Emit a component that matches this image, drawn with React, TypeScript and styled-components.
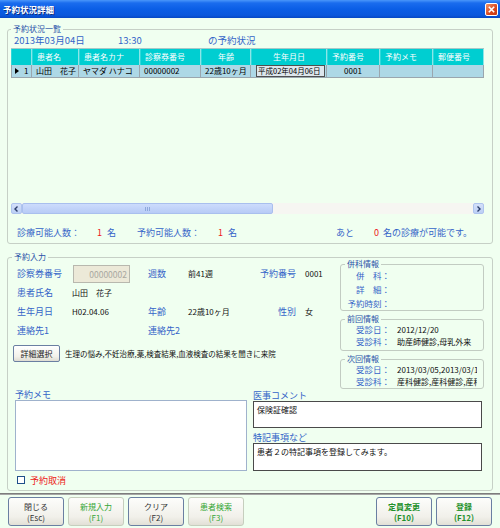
import React from "react";
import styled, { createGlobalStyle, css } from "styled-components";

const GlobalStyle = createGlobalStyle`
  html, body {
    margin: 0;
    padding: 0;
  }
  body {
    font-family: "Noto Sans CJK JP", "Noto Sans", sans-serif;
  }
  * {
    box-sizing: border-box;
  }
`;

const BLUE = "#3464c8";
const LEGEND = "#2a52a8";
const COLS = "21px 47px 61px 61px 50px 76px 53px 53px 51px";

const Window = styled.div`
  width: 500px;
  height: 528px;
  background: #f0fff0;
  display: flex;
  flex-direction: column;
  overflow: hidden;
`;

const TitleBar = styled.div`
  height: 18px;
  flex: none;
  display: flex;
  align-items: center;
  justify-content: space-between;
  padding: 0 2px 0 3px;
  background: linear-gradient(#4a96fa 0px, #1a6cee 3px, #0b5ee6 50%, #0a58dc 85%, #0648c4 100%);
`;

const Title = styled.span`
  color: #fff;
  font-size: 8.5px;
  font-weight: 700;
  line-height: 12px;
  text-shadow: 1px 1px 0 #0a2a80;
`;

const CloseBtn = styled.div`
  width: 13px;
  height: 13px;
  border: 1px solid #fff;
  border-radius: 2px;
  background: linear-gradient(135deg, #f29468, #d9461e 60%, #c63a14);
  display: flex;
  align-items: center;
  justify-content: center;
`;

const Body = styled.div`
  flex: none;
  padding: 0 7px;
`;

const Group = styled.fieldset<{ $top: number; $left: number; $bottom: number }>`
  margin: ${(p) => p.$top}px 0 0 0;
  padding: 0 8px ${(p) => p.$bottom}px ${(p) => p.$left}px;
  border: 1px solid #c6d0c6;
  border-radius: 3px;
  min-inline-size: 0;
`;

const Legend = styled.legend`
  font-size: 8px;
  line-height: 8px;
  color: ${LEGEND};
  padding: 0 2px;
`;

const Line = styled.div<{ $pad?: number }>`
  display: flex;
  align-items: center;
  height: 11px;
  padding-left: ${(p) => p.$pad ?? 0}px;
`;

const Cell = styled.span<{ $w?: number; $size?: number; $red?: boolean }>`
  flex: none;
  width: ${(p) => (p.$w ? `${p.$w}px` : "auto")};
  font-size: ${(p) => p.$size ?? 9}px;
  color: ${(p) => (p.$red ? "#ee1818" : BLUE)};
  white-space: nowrap;
`;

const DateLine = styled(Line)`
  margin-top: 2px;
  height: 10px;
  line-height: 10px;
`;

const GridArea = styled.div`
  margin-top: 3px;
  height: 155px;
`;

const HeaderRow = styled.div`
  display: grid;
  grid-template-columns: ${COLS};
  height: 17px;
  background: #00ced1;
  border-top: 1px solid #a8c8c8;
`;

const HCell = styled.div<{ $center?: boolean }>`
  color: #fff;
  font-size: 8px;
  line-height: 15px;
  padding-left: 4px;
  border-right: 1px solid #8ce6e8;
  border-left: 1px solid #30d8da;
  white-space: nowrap;
  overflow: hidden;
  ${(p) =>
    p.$center &&
    css`
      text-align: center;
      padding-left: 0;
    `}
`;

const DataRow = styled.div`
  display: grid;
  grid-template-columns: ${COLS};
  height: 13px;
  background: #add8e6;
  border-bottom: 1px solid #9aa6ae;
`;

const DCell = styled.div<{ $center?: boolean }>`
  font-size: 8px;
  line-height: 12px;
  color: #000;
  padding-left: 4px;
  border-right: 1px solid #9aa6ae;
  white-space: nowrap;
  overflow: hidden;
  text-align: ${(p) => (p.$center ? "center" : "left")};
  ${(p) => p.$center && "padding-left: 0;"}
`;

const RowHead = styled(DCell)`
  display: flex;
  align-items: center;
  gap: 5px;
  padding-left: 3px;
  border-left: 1px solid #9aa6ae;
`;

const Tri = styled.span`
  width: 0;
  height: 0;
  border-top: 3px solid transparent;
  border-bottom: 3px solid transparent;
  border-left: 4px solid #000;
`;

const EditCell = styled.div`
  margin: 0 1px;
  height: 12px;
  border: 1px solid #505050;
  background: #dde6ec;
  font-size: 7.5px;
  line-height: 10px;
  padding-left: 1px;
  white-space: nowrap;
  overflow: hidden;
`;

const ScrollBar = styled.div`
  display: flex;
  height: 11px;
  background: #f6f6f2;
`;

const ArrowBtn = styled.div`
  flex: none;
  width: 11px;
  height: 11px;
  background: linear-gradient(#d4e0fa, #bccff5);
  border: 1px solid #aec4ee;
  border-radius: 2px;
  display: flex;
  align-items: center;
  justify-content: center;
`;

const Thumb = styled.div`
  flex: none;
  width: 251px;
  height: 11px;
  background: linear-gradient(#cddcfc, #b7cbf6);
  border: 1px solid #a9bfee;
  border-radius: 2px;
  display: flex;
  align-items: center;
  justify-content: center;
`;

const Grip = styled.span`
  width: 5px;
  height: 4px;
  background: repeating-linear-gradient(90deg, #8ea8dc 0 1px, transparent 1px 2px);
`;

const Track = styled.div`
  flex: 1;
`;

const CountLine = styled(Line)`
  margin-top: 12px;
  height: 12px;
`;

const TopSection = styled.div`
  display: flex;
`;

const LeftForm = styled.div`
  width: 328px;
  padding-top: 3px;
`;

const FormGrid = styled.div`
  display: grid;
  grid-template-columns: 55px 76px 40px 52px 56px 1fr;
  grid-auto-rows: 19px;
  align-items: center;
  padding-left: 5px;
`;

const Label = styled.span<{ $right?: boolean }>`
  font-size: 9px;
  color: ${BLUE};
  white-space: nowrap;
  text-align: ${(p) => (p.$right ? "right" : "left")};
`;

const Value = styled.span<{ $span?: number; $pad?: number }>`
  font-size: 8px;
  color: #111;
  white-space: nowrap;
  grid-column: span ${(p) => p.$span ?? 1};
  padding-left: ${(p) => p.$pad ?? 0}px;
`;

const IdInput = styled.div`
  margin-left: 1px;
  width: 57px;
  height: 18px;
  background: #ece9d8;
  border: 1px solid #b8b8ae;
  color: #a8a8a0;
  font-size: 8.5px;
  line-height: 16px;
  text-align: right;
  padding-right: 2px;
`;

const ButtonRow = styled.div`
  display: flex;
  align-items: center;
  gap: 5px;
  margin-top: 5px;
  padding-left: 1px;
`;

const SmallBtn = styled.div`
  width: 47px;
  height: 17px;
  border: 1px solid #6a7fa2;
  border-radius: 2px;
  background: linear-gradient(#ffffff, #f2f1ea 70%, #dedcd2);
  font-size: 8px;
  line-height: 15px;
  text-align: center;
  color: #222;
`;

const Note = styled.span`
  font-size: 7.5px;
  color: #111;
  white-space: nowrap;
`;

const RightCol = styled.div`
  width: 144px;
  margin-top: -1px;
  display: flex;
  flex-direction: column;
  gap: 4px;
`;

const InfoBox = styled.fieldset<{ $bottom: number }>`
  margin: 0;
  padding: 0 0 ${(p) => p.$bottom}px 0;
  border: 1px solid #c2ccc2;
  border-radius: 3px;
  min-inline-size: 0;
`;

const InfoLegend = styled(Legend)`
  margin-left: 4px;
`;

const InfoRow = styled.div<{ $h: number }>`
  display: grid;
  grid-template-columns: 49px minmax(0, 1fr);
  column-gap: 7px;
  height: ${(p) => p.$h}px;
  align-items: center;
  padding-right: 6px;
`;

const InfoLabel = styled.span`
  font-size: 8.5px;
  color: ${BLUE};
  text-align: right;
  white-space: nowrap;
`;

const InfoValue = styled.span`
  font-size: 8px;
  color: #111;
  white-space: nowrap;
  overflow: hidden;
  min-width: 0;
`;

const MemoSection = styled.div`
  display: flex;
  gap: 6px;
  padding-left: 3px;
`;

const MemoCol = styled.div<{ $w: number }>`
  width: ${(p) => p.$w}px;
  display: flex;
  flex-direction: column;
`;

const MemoLabel = styled.div<{ $h: number }>`
  height: ${(p) => p.$h}px;
  font-size: 9px;
  line-height: 11px;
  color: ${BLUE};
  display: flex;
  align-items: flex-end;
`;

const TextBox = styled.div<{ $h: number; $dark?: boolean }>`
  height: ${(p) => p.$h}px;
  background: #fff;
  border: 1px solid ${(p) => (p.$dark ? "#4a4a4a" : "#9fb2cc")};
  font-size: 8px;
  line-height: 12px;
  padding: 2px 3px;
  color: #111;
`;

const CheckLine = styled.div`
  display: flex;
  align-items: center;
  gap: 5px;
  height: 12px;
  margin-top: 3px;
  padding-left: 5px;
`;

const CheckBox = styled.span`
  width: 8px;
  height: 8px;
  border: 1px solid #1f4f8a;
  background: #fff;
`;

const CheckText = styled.span`
  font-size: 9px;
  color: #ee1818;
`;

const Separator = styled.div`
  margin-top: 2px;
  height: 2px;
  border-top: 1px solid #7c7c7c;
  border-bottom: 1px solid #a6a6a6;
`;

const Footer = styled.div`
  display: flex;
  justify-content: space-between;
  padding: 2px 8px 0 8px;
`;

const KeyGroup = styled.div`
  display: flex;
  gap: 4px;
`;

type Tone = "plain" | "soft" | "strong";

const KeyBtn = styled.div<{ $tone: Tone }>`
  width: 56px;
  height: 29px;
  border-radius: 3px;
  border: 1px solid ${(p) => (p.$tone === "soft" ? "#c6cebe" : "#6a7fa2")};
  background: linear-gradient(#fdfdfb, #f1f0ea 70%, #e2e0d6);
  display: flex;
  flex-direction: column;
  align-items: center;
  justify-content: center;
  font-size: 8px;
  line-height: 11px;
  color: ${(p) => (p.$tone === "plain" ? "#333" : p.$tone === "soft" ? "#34a634" : "#22902a")};
  font-weight: ${(p) => (p.$tone === "strong" ? 700 : 400)};
`;

const Chevron = ({ dir }: { dir: "l" | "r" }) => (
  <svg width="5" height="6" viewBox="0 0 5 6">
    <path
      d={dir === "l" ? "M3.5 0.5 L1 3 L3.5 5.5" : "M1.5 0.5 L4 3 L1.5 5.5"}
      fill="none"
      stroke="#2c3e6a"
      strokeWidth="1.4"
    />
  </svg>
);

const keys: { top: string; sub: string; tone: Tone }[] = [
  { top: "閉じる", sub: "(Esc)", tone: "plain" },
  { top: "新規入力", sub: "(F1)", tone: "soft" },
  { top: "クリア", sub: "(F2)", tone: "plain" },
  { top: "患者検索", sub: "(F3)", tone: "soft" },
];

const rightKeys: { top: string; sub: string; tone: Tone }[] = [
  { top: "定員変更", sub: "(F10)", tone: "strong" },
  { top: "登録", sub: "(F12)", tone: "strong" },
];

export default function App() {
  return (
    <>
      <GlobalStyle />
      <Window>
        <TitleBar>
          <Title>予約状況詳細</Title>
          <CloseBtn>
            <svg width="7" height="7" viewBox="0 0 7 7">
              <path d="M0.8 0.8 L6.2 6.2 M6.2 0.8 L0.8 6.2" stroke="#fff" strokeWidth="1.6" />
            </svg>
          </CloseBtn>
        </TitleBar>

        <Body>
          <Group $top={7} $left={3} $bottom={5}>
            <Legend>予約状況一覧</Legend>
            <DateLine $pad={3}>
              <Cell $w={104} $size={9.5}>2013年03月04日</Cell>
              <Cell $w={90} $size={9.5}>13:30</Cell>
              <Cell $size={9.5}>の予約状況</Cell>
            </DateLine>

            <GridArea>
              <HeaderRow>
                <HCell />
                <HCell>患者名</HCell>
                <HCell>患者名カナ</HCell>
                <HCell>診察券番号</HCell>
                <HCell $center>年齢</HCell>
                <HCell $center>生年月日</HCell>
                <HCell>予約番号</HCell>
                <HCell>予約メモ</HCell>
                <HCell>郵便番号</HCell>
              </HeaderRow>
              <DataRow>
                <RowHead>
                  <Tri />
                  1
                </RowHead>
                <DCell>山田　花子</DCell>
                <DCell>ヤマダ ハナコ</DCell>
                <DCell>00000002</DCell>
                <DCell>22歳10ヶ月</DCell>
                <DCell>
                  <EditCell>平成02年04月06日</EditCell>
                </DCell>
                <DCell $center>0001</DCell>
                <DCell />
                <DCell />
              </DataRow>
            </GridArea>

            <ScrollBar>
              <ArrowBtn>
                <Chevron dir="l" />
              </ArrowBtn>
              <Thumb>
                <Grip />
              </Thumb>
              <Track />
              <ArrowBtn>
                <Chevron dir="r" />
              </ArrowBtn>
            </ScrollBar>

            <CountLine $pad={6}>
              <Cell $w={80}>診療可能人数：</Cell>
              <Cell $w={10} $red>1</Cell>
              <Cell $w={30}>名</Cell>
              <Cell $w={81}>予約可能人数：</Cell>
              <Cell $w={10} $red>1</Cell>
              <Cell $w={108}>名</Cell>
              <Cell $w={38}>あと</Cell>
              <Cell $w={9} $red>0</Cell>
              <Cell>名の診療が可能です。</Cell>
            </CountLine>
          </Group>

          <Group $top={9} $left={4} $bottom={4}>
            <Legend>予約入力</Legend>
            <TopSection>
              <LeftForm>
                <FormGrid>
                  <Label>診察券番号</Label>
                  <IdInput>00000002</IdInput>
                  <Label>週数</Label>
                  <Value>前41週</Value>
                  <Label $right>予約番号</Label>
                  <Value $pad={9}>0001</Value>

                  <Label>患者氏名</Label>
                  <Value $span={5}>山田　花子</Value>

                  <Label>生年月日</Label>
                  <Value>H02.04.06</Value>
                  <Label>年齢</Label>
                  <Value>22歳10ヶ月</Value>
                  <Label $right>性別</Label>
                  <Value $pad={9}>女</Value>

                  <Label>連絡先1</Label>
                  <Value />
                  <Label>連絡先2</Label>
                </FormGrid>
                <ButtonRow>
                  <SmallBtn>詳細選択</SmallBtn>
                  <Note>生理の悩み,不妊治療,薬,検査結果,血液検査の結果を聞きに来院</Note>
                </ButtonRow>
              </LeftForm>

              <RightCol>
                <InfoBox $bottom={0}>
                  <InfoLegend>併科情報</InfoLegend>
                  <InfoRow $h={14}>
                    <InfoLabel>併　科：</InfoLabel>
                    <InfoValue />
                  </InfoRow>
                  <InfoRow $h={14}>
                    <InfoLabel>詳　細：</InfoLabel>
                    <InfoValue />
                  </InfoRow>
                  <InfoRow $h={14}>
                    <InfoLabel>予約時刻：</InfoLabel>
                    <InfoValue />
                  </InfoRow>
                </InfoBox>
                <InfoBox $bottom={3}>
                  <InfoLegend>前回情報</InfoLegend>
                  <InfoRow $h={12}>
                    <InfoLabel>受診日：</InfoLabel>
                    <InfoValue>2012/12/20</InfoValue>
                  </InfoRow>
                  <InfoRow $h={12}>
                    <InfoLabel>受診科：</InfoLabel>
                    <InfoValue>助産師健診,母乳外来</InfoValue>
                  </InfoRow>
                </InfoBox>
                <InfoBox $bottom={1}>
                  <InfoLegend>次回情報</InfoLegend>
                  <InfoRow $h={12}>
                    <InfoLabel>受診日：</InfoLabel>
                    <InfoValue>2013/03/05,2013/03/12</InfoValue>
                  </InfoRow>
                  <InfoRow $h={12}>
                    <InfoLabel>受診科：</InfoLabel>
                    <InfoValue>産科健診,産科健診,産科健診</InfoValue>
                  </InfoRow>
                </InfoBox>
              </RightCol>
            </TopSection>

            <MemoSection>
              <MemoCol $w={232}>
                <MemoLabel $h={11}>予約メモ</MemoLabel>
                <TextBox $h={71} />
              </MemoCol>
              <MemoCol $w={229}>
                <MemoLabel $h={12}>医事コメント</MemoLabel>
                <TextBox $h={27} $dark>
                  保険証確認
                </TextBox>
                <MemoLabel $h={15}>特記事項など</MemoLabel>
                <TextBox $h={28} $dark>
                  患者２の特記事項を登録してみます。
                </TextBox>
              </MemoCol>
            </MemoSection>

            <CheckLine>
              <CheckBox />
              <CheckText>予約取消</CheckText>
            </CheckLine>
          </Group>
        </Body>

        <Separator />
        <Footer>
          <KeyGroup>
            {keys.map((k) => (
              <KeyBtn key={k.top} $tone={k.tone}>
                <span>{k.top}</span>
                <span>{k.sub}</span>
              </KeyBtn>
            ))}
          </KeyGroup>
          <KeyGroup>
            {rightKeys.map((k) => (
              <KeyBtn key={k.top} $tone={k.tone}>
                <span>{k.top}</span>
                <span>{k.sub}</span>
              </KeyBtn>
            ))}
          </KeyGroup>
        </Footer>
      </Window>
    </>
  );
}
